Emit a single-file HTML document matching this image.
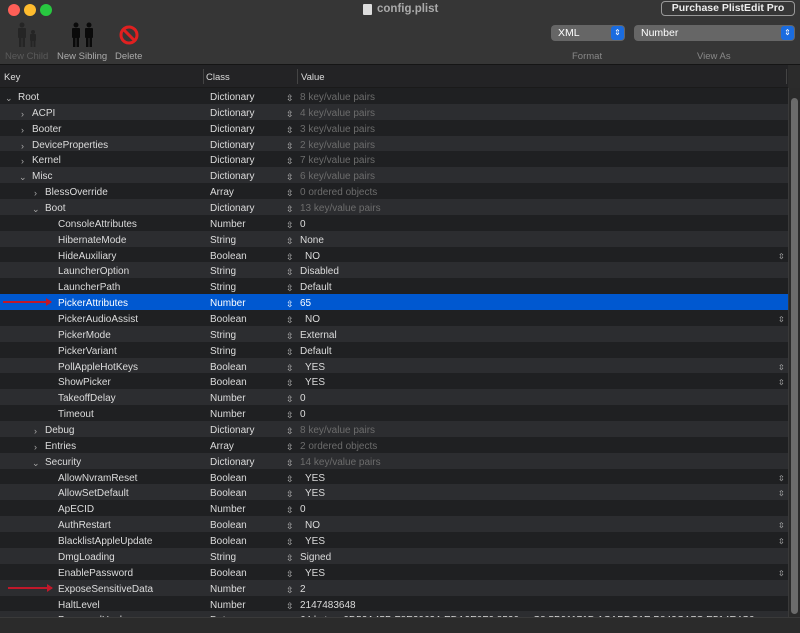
<!DOCTYPE html>
<html><head><meta charset="utf-8"><style>
*{margin:0;padding:0;box-sizing:border-box}
body{width:800px;height:633px;overflow:hidden;background:#2b2b2b;font-family:"Liberation Sans",sans-serif;font-size:10px;color:#dcdcdc;position:relative}
.tb{position:absolute;left:0;top:0;width:800px;height:65px;background:#363636;border-bottom:1px solid #151515}
.dot{position:absolute;top:4px;width:12px;height:12px;border-radius:50%}
.lbl{position:absolute;top:51px;font-size:9.5px;color:#aaa}
.hdr{position:absolute;left:0;top:65px;width:788px;height:23px;background:#232325;border-bottom:1px solid #1a1a1a}
.hdr span{position:absolute;top:7px;font-size:9.5px;color:#ddd}
.hdr i{position:absolute;top:4px;width:1px;height:15px;background:#444}
.tbl{position:absolute;left:0;top:88px;width:788px;height:529px;overflow:hidden}
.r{position:relative;height:15.87px;line-height:16px;white-space:nowrap}
.r:nth-child(odd){background:#1f2022}
.r:nth-child(even){background:#2c2d30}
.r.sel{background:#0058d0;color:#fff}
.r span{position:absolute;top:2px}
.c{left:210px}
.st{left:286px;color:#bbb;font-size:9px}
.v{left:300px}
.d{color:#6c6c6c}
.rs{left:778px;color:#bbb;font-size:8px}
.ch{color:#aaa;font-size:9px}
.sb{position:absolute;left:788px;top:88px;width:12px;height:529px;background:#2a2a2a;border-left:1px solid #3a3a3a}
.sb div{position:absolute;left:2px;top:10px;width:7px;height:516px;background:#6b6b6b;border-radius:4px}
.bot{position:absolute;left:0;top:617px;width:800px;height:16px;background:#2b2b2b;border-top:1px solid #3a3a3a}
.pop{position:absolute;top:25px;height:16px;background:#666;border-radius:4px;color:#fff;font-size:10.5px;line-height:16px;padding-left:7px}
.pop b{position:absolute;right:1px;top:1px;width:13px;height:14px;background:#1a6ce0;border-radius:3px;font-size:8px;text-align:center;line-height:14px;font-weight:normal}
</style></head><body>
<div class="tb">
<div class="dot" style="left:8px;background:#fe5f57"></div>
<div class="dot" style="left:24px;background:#febc2e"></div>
<div class="dot" style="left:40px;background:#28c840"></div>
<div style="position:absolute;left:363px;top:4px;width:9px;height:11px;background:#ddd;border-radius:1px"></div>
<div style="position:absolute;left:377px;top:3px;font-size:11.5px;color:#aaa;font-weight:bold">config.plist</div>
<div style="position:absolute;left:661px;top:1px;width:134px;height:15px;border:1px solid #999;border-radius:4px;text-align:center;font-size:10.5px;line-height:13px;color:#eee;font-weight:bold">Purchase PlistEdit Pro</div>
<svg style="position:absolute;left:16px;top:22px" width="24" height="25"><g fill="#252525"><circle cx="6" cy="3" r="2.5"/><rect x="2" y="6" width="8" height="10" rx="1"/><rect x="3" y="15" width="2.5" height="10"/><rect x="6.5" y="15" width="2.5" height="10"/><circle cx="17" cy="10" r="2"/><rect x="14" y="12" width="6" height="7" rx="1"/><rect x="14.5" y="18" width="2" height="7"/><rect x="17.5" y="18" width="2" height="7"/></g></svg>
<svg style="position:absolute;left:70px;top:22px" width="26" height="25"><g fill="#0a0a0a"><circle cx="6" cy="3" r="2.5"/><rect x="2" y="6" width="8" height="10" rx="1"/><rect x="3" y="15" width="2.5" height="10"/><rect x="6.5" y="15" width="2.5" height="10"/><circle cx="19" cy="3" r="2.5"/><rect x="15" y="6" width="8" height="10" rx="1"/><rect x="16" y="15" width="2.5" height="10"/><rect x="19.5" y="15" width="2.5" height="10"/></g></svg>
<svg style="position:absolute;left:119px;top:25px" width="20" height="20"><circle cx="10" cy="10" r="8" fill="none" stroke="#e02020" stroke-width="3"/><line x1="4.5" y1="4.5" x2="15.5" y2="15.5" stroke="#e02020" stroke-width="3"/></svg>
<div class="lbl" style="left:5px;color:#5a5a5a">New Child</div>
<div class="lbl" style="left:57px">New Sibling</div>
<div class="lbl" style="left:115px">Delete</div>
<div class="pop" style="left:551px;width:74px">XML<b>⇕</b></div>
<div class="pop" style="left:634px;width:161px">Number<b>⇕</b></div>
<div class="lbl" style="left:572px;color:#888">Format</div>
<div class="lbl" style="left:697px;color:#888">View As</div>
</div>
<div class="hdr"><span style="left:4px">Key</span><i style="left:203px"></i><span style="left:206px">Class</span><i style="left:297px"></i><span style="left:301px">Value</span><i style="left:786px"></i></div>
<div class="tbl">
<div class="r"><span class="ch" style="left:5px">⌄</span><span style="left:18px">Root</span><span class="c">Dictionary</span><span class="st">⇳</span><span class="v d">8 key/value pairs</span></div>
<div class="r"><span class="ch" style="left:21px">›</span><span style="left:32px">ACPI</span><span class="c">Dictionary</span><span class="st">⇳</span><span class="v d">4 key/value pairs</span></div>
<div class="r"><span class="ch" style="left:21px">›</span><span style="left:32px">Booter</span><span class="c">Dictionary</span><span class="st">⇳</span><span class="v d">3 key/value pairs</span></div>
<div class="r"><span class="ch" style="left:21px">›</span><span style="left:32px">DeviceProperties</span><span class="c">Dictionary</span><span class="st">⇳</span><span class="v d">2 key/value pairs</span></div>
<div class="r"><span class="ch" style="left:21px">›</span><span style="left:32px">Kernel</span><span class="c">Dictionary</span><span class="st">⇳</span><span class="v d">7 key/value pairs</span></div>
<div class="r"><span class="ch" style="left:19px">⌄</span><span style="left:32px">Misc</span><span class="c">Dictionary</span><span class="st">⇳</span><span class="v d">6 key/value pairs</span></div>
<div class="r"><span class="ch" style="left:34px">›</span><span style="left:45px">BlessOverride</span><span class="c">Array</span><span class="st">⇳</span><span class="v d">0 ordered objects</span></div>
<div class="r"><span class="ch" style="left:32px">⌄</span><span style="left:45px">Boot</span><span class="c">Dictionary</span><span class="st">⇳</span><span class="v d">13 key/value pairs</span></div>
<div class="r"><span style="left:58px">ConsoleAttributes</span><span class="c">Number</span><span class="st">⇳</span><span class="v">0</span></div>
<div class="r"><span style="left:58px">HibernateMode</span><span class="c">String</span><span class="st">⇳</span><span class="v">None</span></div>
<div class="r"><span style="left:58px">HideAuxiliary</span><span class="c">Boolean</span><span class="st">⇳</span><span class="v" style="left:305px">NO</span><span class="rs">⇳</span></div>
<div class="r"><span style="left:58px">LauncherOption</span><span class="c">String</span><span class="st">⇳</span><span class="v">Disabled</span></div>
<div class="r"><span style="left:58px">LauncherPath</span><span class="c">String</span><span class="st">⇳</span><span class="v">Default</span></div>
<div class="r sel"><span style="left:3px;top:7px;width:48px;height:2px;background:#c0182a"></span><span style="left:46px;top:4px;width:0;height:0;border-left:6px solid #c0182a;border-top:4px solid transparent;border-bottom:4px solid transparent"></span><span style="left:58px">PickerAttributes</span><span class="c">Number</span><span class="st" style="color:#fff">⇳</span><span class="v">65</span></div>
<div class="r"><span style="left:58px">PickerAudioAssist</span><span class="c">Boolean</span><span class="st">⇳</span><span class="v" style="left:305px">NO</span><span class="rs">⇳</span></div>
<div class="r"><span style="left:58px">PickerMode</span><span class="c">String</span><span class="st">⇳</span><span class="v">External</span></div>
<div class="r"><span style="left:58px">PickerVariant</span><span class="c">String</span><span class="st">⇳</span><span class="v">Default</span></div>
<div class="r"><span style="left:58px">PollAppleHotKeys</span><span class="c">Boolean</span><span class="st">⇳</span><span class="v" style="left:305px">YES</span><span class="rs">⇳</span></div>
<div class="r"><span style="left:58px">ShowPicker</span><span class="c">Boolean</span><span class="st">⇳</span><span class="v" style="left:305px">YES</span><span class="rs">⇳</span></div>
<div class="r"><span style="left:58px">TakeoffDelay</span><span class="c">Number</span><span class="st">⇳</span><span class="v">0</span></div>
<div class="r"><span style="left:58px">Timeout</span><span class="c">Number</span><span class="st">⇳</span><span class="v">0</span></div>
<div class="r"><span class="ch" style="left:34px">›</span><span style="left:45px">Debug</span><span class="c">Dictionary</span><span class="st">⇳</span><span class="v d">8 key/value pairs</span></div>
<div class="r"><span class="ch" style="left:34px">›</span><span style="left:45px">Entries</span><span class="c">Array</span><span class="st">⇳</span><span class="v d">2 ordered objects</span></div>
<div class="r"><span class="ch" style="left:32px">⌄</span><span style="left:45px">Security</span><span class="c">Dictionary</span><span class="st">⇳</span><span class="v d">14 key/value pairs</span></div>
<div class="r"><span style="left:58px">AllowNvramReset</span><span class="c">Boolean</span><span class="st">⇳</span><span class="v" style="left:305px">YES</span><span class="rs">⇳</span></div>
<div class="r"><span style="left:58px">AllowSetDefault</span><span class="c">Boolean</span><span class="st">⇳</span><span class="v" style="left:305px">YES</span><span class="rs">⇳</span></div>
<div class="r"><span style="left:58px">ApECID</span><span class="c">Number</span><span class="st">⇳</span><span class="v">0</span></div>
<div class="r"><span style="left:58px">AuthRestart</span><span class="c">Boolean</span><span class="st">⇳</span><span class="v" style="left:305px">NO</span><span class="rs">⇳</span></div>
<div class="r"><span style="left:58px">BlacklistAppleUpdate</span><span class="c">Boolean</span><span class="st">⇳</span><span class="v" style="left:305px">YES</span><span class="rs">⇳</span></div>
<div class="r"><span style="left:58px">DmgLoading</span><span class="c">String</span><span class="st">⇳</span><span class="v">Signed</span></div>
<div class="r"><span style="left:58px">EnablePassword</span><span class="c">Boolean</span><span class="st">⇳</span><span class="v" style="left:305px">YES</span><span class="rs">⇳</span></div>
<div class="r"><span style="left:8px;top:7px;width:44px;height:2px;background:#c0182a"></span><span style="left:47px;top:4px;width:0;height:0;border-left:6px solid #c0182a;border-top:4px solid transparent;border-bottom:4px solid transparent"></span><span style="left:58px">ExposeSensitiveData</span><span class="c">Number</span><span class="st">⇳</span><span class="v">2</span></div>
<div class="r"><span style="left:58px">HaltLevel</span><span class="c">Number</span><span class="st">⇳</span><span class="v">2147483648</span></div>
<div class="r"><span style="left:58px">PasswordHash</span><span class="c">Data</span><span class="st">⇳</span><span class="v">64 bytes: 0D52A45B F8E2063A EDA2E0F0 8520 ... C8 5B91171D 1CABDC1E B842CA7C E514E4C0</span></div>
</div>
<div class="sb"><div></div></div>
<div class="bot"></div>
</body></html>
